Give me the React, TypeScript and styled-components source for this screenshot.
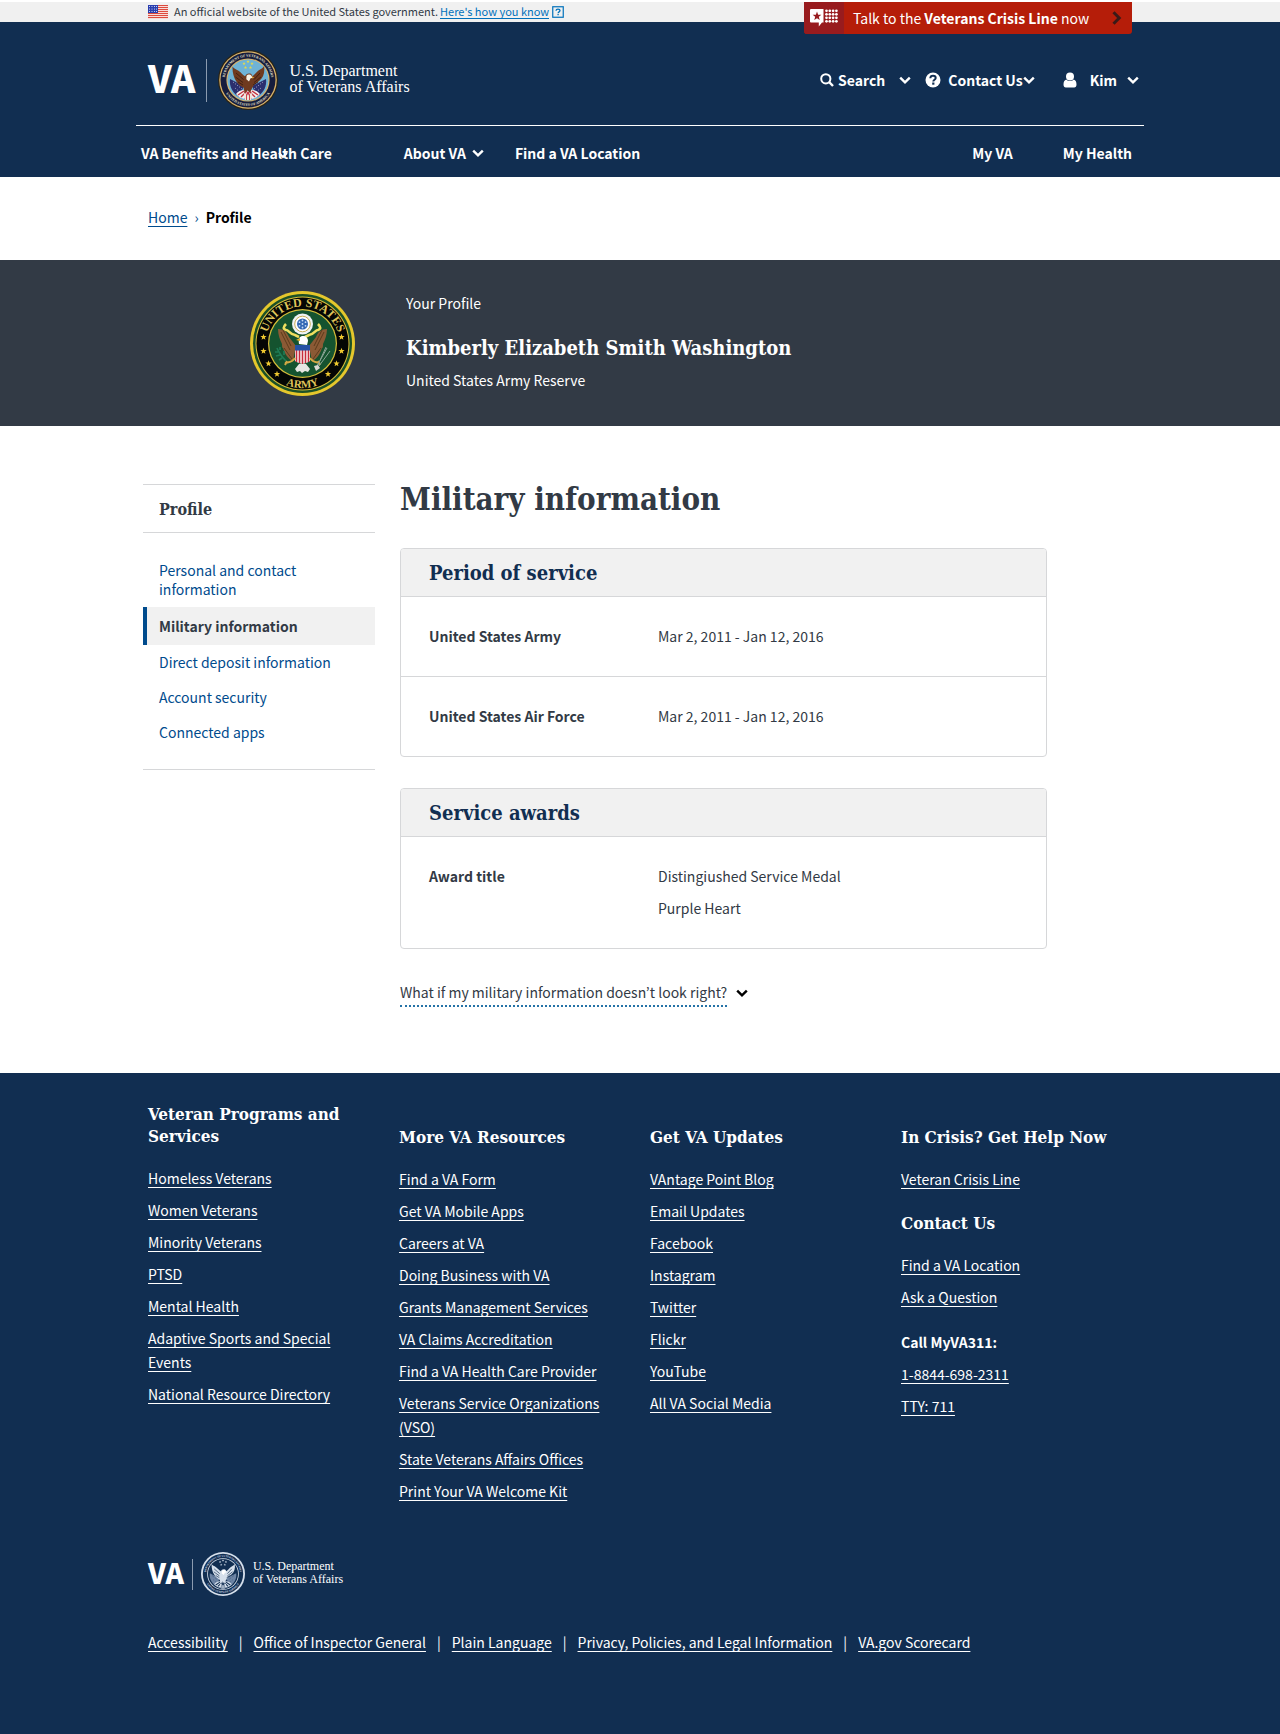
import React from "react";
import styled, { createGlobalStyle } from "styled-components";

const sans = `"Noto Sans CJK KR", "Noto Sans", sans-serif`;
const slab = `"DejaVu Serif Condensed", "DejaVu Serif", serif`;
const logoSerif = `"Liberation Serif", serif`;

const color = {
  navy: "#112e51",
  slate: "#323a45",
  grey: "#f1f1f1",
  rule: "#d6d7d9",
  link: "#004b8d",
};

const GlobalStyle = createGlobalStyle`
  *, *::before, *::after { box-sizing: border-box; }
  body {
    margin: 0;
    background: #fff;
    color: ${color.slate};
    font-family: ${sans};
    font-size: 14px;
    line-height: 24px;
  }
  h1, h2, h3, p, ul, ol, dl, dd { margin: 0; padding: 0; }
  ul, ol { list-style: none; }
  button { font: inherit; color: inherit; background: none; border: 0; padding: 0; cursor: pointer; }
  svg { display: block; flex: none; }
`;

const Container = styled.div`
  max-width: 1008px;
  margin: 0 auto;
`;

/* Government banner */
const Banner = styled.div`
  margin-top: 2px;
  background: #f0f0f0;
`;

const BannerInner = styled(Container)`
  position: relative;
  display: flex;
  align-items: center;
  height: 20px;
  padding: 0 12px;
  font-size: 11px;
  line-height: 18px;
`;

const BannerText = styled.span`
  margin: 0 2px 2px 6px;
`;

const BannerToggle = styled.button`
  display: flex;
  align-items: center;
  gap: 3px;
  color: #0071bb;
  line-height: 14px;
  span { margin-bottom: 1px; border-bottom: 1px solid currentColor; }
`;

const CrisisLine = styled.button`
  position: absolute;
  top: 0;
  right: 12px;
  z-index: 1;
  display: flex;
  align-items: center;
  width: 328px;
  height: 32px;
  padding-right: 10px;
  overflow: hidden;
  border-radius: 0 0 3px 3px;
  background: #b51d09;
  color: #fff;
  font-size: 14px;
  text-align: left;
`;

const CrisisBadge = styled.span`
  display: flex;
  align-items: center;
  justify-content: center;
  width: 40px;
  height: 32px;
  margin-right: 9px;
  background: #981b1e;
`;

const CrisisText = styled.span`
  flex: 1;
  white-space: nowrap;
`;

/* Header */
const Header = styled.header`
  background: ${color.navy};
  color: #fff;
`;

const HeaderTop = styled(Container)`
  display: flex;
  justify-content: space-between;
  height: 104px;
  padding: 28px 5px 0 12px;
  border-bottom: 1px solid #fff;
`;

const Brand = styled.a<{ $small?: boolean }>`
  display: flex;
  align-items: center;
  gap: ${(p) => (p.$small ? 8 : 11)}px;
  height: ${(p) => (p.$small ? 44 : 60)}px;
  color: #fff;
  text-decoration: none;
`;

const Wordmark = styled.span<{ $small?: boolean }>`
  padding-bottom: ${(p) => (p.$small ? 4 : 6)}px;
  font-weight: 900;
  font-size: ${(p) => (p.$small ? 28 : 37)}px;
  line-height: 1;
`;

const BrandRule = styled.span<{ $small?: boolean }>`
  width: 1px;
  height: ${(p) => (p.$small ? 31 : 43)}px;
  background: #8b9bb0;
`;

const BrandName = styled.span<{ $small?: boolean }>`
  padding-bottom: 2px;
  font-family: ${logoSerif};
  font-size: ${(p) => (p.$small ? 12 : 16)}px;
  line-height: ${(p) => (p.$small ? 13 : 16)}px;
  white-space: nowrap;
`;

const UserTools = styled.div`
  display: flex;
  align-items: center;
  height: 60px;
  gap: 14px;
`;

const ToolButton = styled.button<{ $gap: number }>`
  display: flex;
  align-items: center;
  font-weight: 700;
  white-space: nowrap;
  > span { margin-left: ${(p) => p.$gap}px; }
`;

const ToolChevron = styled.i<{ $gap: number }>`
  margin-left: ${(p) => p.$gap}px;
`;

const MainNav = styled(Container)`
  display: flex;
  align-items: center;
  height: 51px;
  padding: 3px 12px 0 5px;
`;

const NavItem = styled.button<{ $gapBefore?: number }>`
  position: relative;
  display: flex;
  align-items: center;
  gap: 6px;
  margin-left: ${(p) => p.$gapBefore ?? 0}px;
  font-weight: 700;
  white-space: nowrap;
`;

const NavLink = styled.a<{ $push?: boolean; $gapBefore?: number }>`
  margin-left: ${(p) => (p.$push ? "auto" : `${p.$gapBefore ?? 0}px`)};
  color: #fff;
  font-weight: 700;
  text-decoration: none;
`;

const OverlaidChevron = styled.i`
  position: absolute;
  top: 9px;
  left: 137px;
`;

/* Breadcrumb */
const Breadcrumb = styled(Container)`
  display: flex;
  align-items: center;
  gap: 7px;
  height: 83px;
  padding: 0 12px 3px;
  color: ${color.link};
  a { color: ${color.link}; text-underline-offset: 3px; }
  strong { color: #000; }
`;

/* Profile banner */
const ProfileBand = styled.section`
  background: ${color.slate};
  color: #fff;
`;

const ProfileInner = styled(Container)`
  display: flex;
  gap: 51px;
  height: 166px;
  padding: 31px 12px 0 114px;
`;

const ProfileText = styled.div`
  > p { line-height: 24px; }
  h2 { margin: 21px 0 8px; font: 700 20px/24px ${slab}; }
`;

/* Main area */
const Main = styled(Container)`
  display: grid;
  grid-template-columns: 232px minmax(0, 647px);
  gap: 25px;
  padding: 58px 0 66px 7px;
`;

const SideNav = styled.nav`
  align-self: start;
  border-top: 1px solid ${color.rule};
  border-bottom: 1px solid ${color.rule};
  padding-bottom: 19px;
`;

const SideTitle = styled.h2`
  margin-bottom: 20px;
  padding: 3px 16px 0;
  border-bottom: 1px solid ${color.rule};
  font: 700 16px/44px ${slab};
`;

const SideLink = styled.a<{ $current?: boolean }>`
  display: block;
  padding: ${(p) => (p.$current ? "10px 12px 9px" : "8px 16px")};
  border-left: ${(p) => (p.$current ? `4px solid ${color.link}` : "0")};
  background: ${(p) => (p.$current ? color.grey : "transparent")};
  color: ${(p) => (p.$current ? color.slate : color.link)};
  font-weight: ${(p) => (p.$current ? 700 : 400)};
  line-height: 19px;
  text-decoration: none;
`;

const Content = styled.main``;

const PageTitle = styled.h1`
  margin: -5px 0 29px;
  font: 700 31px/40px ${slab};
`;

const Card = styled.section`
  margin-bottom: 31px;
  border: 1px solid ${color.rule};
  border-radius: 4px;
  overflow: hidden;
`;

const CardTitle = styled.h2`
  padding: 2px 28px 0;
  border-bottom: 1px solid ${color.rule};
  background: ${color.grey};
  color: ${color.navy};
  font: 700 20px/45px ${slab};
`;

const CardRow = styled.div`
  display: grid;
  grid-template-columns: 200px 1fr;
  column-gap: 29px;
  padding: 23px 28px 24px;
  line-height: 32px;
  & + & { border-top: 1px solid ${color.rule}; }
  dt { font-weight: 700; }
`;

const HelpToggle = styled.button`
  display: flex;
  align-items: flex-start;
  gap: 9px;
  span { padding-bottom: 1px; border-bottom: 2px dotted #2573a7; }
  svg { margin-top: 7px; color: #000; }
`;

/* Footer */
const Footer = styled.footer`
  background: ${color.navy};
  color: #fff;
`;

const FooterInner = styled(Container)`
  padding: 30px 0 80px 12px;
`;

const FooterColumns = styled.div`
  display: grid;
  grid-template-columns: repeat(4, 210px);
  column-gap: 41px;
  min-height: 449px;
`;

const FooterColumn = styled.div<{ $offset?: boolean }>`
  padding-top: ${(p) => (p.$offset ? 23 : 0)}px;
`;

const FooterHeading = styled.h3<{ $spaced?: boolean }>`
  margin: ${(p) => (p.$spaced ? "21px" : "0")} 0 19px;
  font: 700 17px/22px ${slab};
`;

const FooterLinks = styled.ul`
  display: flex;
  flex-direction: column;
  gap: 8px;
  a { color: #fff; text-underline-offset: 3px; }
`;

const CallLabel = styled.p`
  margin: 21px 0 8px;
  font-weight: 700;
`;

const LegalLinks = styled.ul`
  display: flex;
  flex-wrap: wrap;
  margin-top: 34px;
  li + li::before { content: "|"; margin: 0 11px; }
  a { color: #fff; text-underline-offset: 3px; }
`;

const Chevron = ({ size = 12 }: { size?: number }) => (
  <svg width={size} height={size} viewBox="0 0 12 12" fill="none" stroke="currentColor" strokeWidth="2.4" aria-hidden="true">
    <path d="M1.2 3.6 6 8.4l4.8-4.8" />
  </svg>
);

const SearchIcon = () => (
  <svg width="14" height="14" viewBox="0 0 14 14" fill="none" stroke="currentColor" strokeWidth="2" aria-hidden="true">
    <circle cx="5.8" cy="5.8" r="4.6" />
    <path d="m9.2 9.2 3.8 3.8" strokeWidth="2.4" />
  </svg>
);

const HelpIcon = () => (
  <svg width="16" height="16" viewBox="0 0 16 16" aria-hidden="true">
    <circle cx="8" cy="8" r="7.5" fill="currentColor" />
    <path d="M5.3 6.2C5.4 4.5 6.5 3.8 8 3.8c1.600 0 2.700.9 2.700 2.200 0 1.700-2.400 1.800-2.400 3.500" fill="none" stroke={color.navy} strokeWidth="2" />
    <rect x="7.200" y="10.500" width="2.200" height="2.200" fill={color.navy} />
  </svg>
);

const UserIcon = () => (
  <svg width="14" height="16" viewBox="0 0 14 16" fill="currentColor" aria-hidden="true">
    <circle cx="7" cy="4.400" r="4" />
    <path d="M3.300 7.500C1.300 8 .5 10 .5 12.800c0 1.600.9 2.700 2.300 2.700h8.400c1.400 0 2.300-1.100 2.300-2.700 0-2.800-.8-4.800-2.800-5.300C9.700 8.500 8.400 9 7 9s-2.700-.5-3.700-1.500Z" />
  </svg>
);

const FlagIcon = () => (
  <svg width="20" height="14" viewBox="0 0 20 14" aria-hidden="true">
    <rect width="20" height="14" fill="#fff" />
    {[0, 2, 4, 6, 8, 10, 12].map((y) => (
      <rect key={y} y={y} width="20" height="1.200" fill="#dd4b3e" />
    ))}
    <rect width="10" height="8" fill="#2a3fb0" />
    {[1.5, 4, 6.500].map((y) =>
      [1.5, 4, 6.500, 8.500].map((x) => <circle key={`${x}-${y}`} cx={x} cy={y} r=".5" fill="#fff" />)
    )}
  </svg>
);

const QuestionBoxIcon = () => (
  <svg width="12" height="12" viewBox="0 0 12 12" fill="none" stroke="currentColor" aria-hidden="true">
    <rect x=".75" y=".75" width="10.500" height="10.500" strokeWidth="1.200" />
    <path d="M4 4.700C4.100 3.600 4.900 3.100 6 3.100s2 .6 2 1.500C8 5.900 6.100 5.800 6.100 7.200M6.100 8v1.300" strokeWidth="1.300" />
  </svg>
);

const star = (cx: number, cy: number, r: number) =>
  Array.from({ length: 10 }, (_, i) => {
    const a = (Math.PI / 5) * i - Math.PI / 2;
    const q = i % 2 ? r * 0.42 : r;
    return `${(cx + q * Math.cos(a)).toFixed(2)},${(cy + q * Math.sin(a)).toFixed(2)}`;
  }).join(" ");

const CrisisIcon = () => (
  <svg width="28" height="18" viewBox="0 0 28 18" fill="#fff" aria-hidden="true">
    <path d="M1 0h12.500v13.500H12L8.800 17.500v-4H1a1 1 0 0 1-1-1V1a1 1 0 0 1 1-1Z" />
    <polygon points={star(7, 7.200, 4.600)} fill="#981b1e" />
    {[1.800, 5.300, 8.800, 12.300].map((y) =>
      [16.500, 19.800, 23.100, 26.400].map((x) => <circle key={`${x}-${y}`} cx={x} cy={y} r="1.350" />)
    )}
  </svg>
);

const CrisisChevron = () => (
  <svg width="10" height="14" viewBox="0 0 10 14" fill="none" stroke="#3a1a18" strokeWidth="3" aria-hidden="true">
    <path d="m1.500 1.200 5.700 5.800-5.700 5.800" />
  </svg>
);

const VaSeal = ({ size, mono = false }: { size: number; mono?: boolean }) => {
  const id = mono ? "mono" : "full";
  const pale = "#d5dfeb";
  const ring = mono ? pale : "#d9b36a";
  const band = mono ? color.navy : "#161d3d";
  const sky = mono ? color.navy : "#6fb3d6";
  const wing = mono ? pale : "#6f3a1f";
  return (
    <svg width={size} height={size} viewBox="0 0 60 60" aria-hidden="true">
      <defs>
        <path id={`${id}-top`} d="M30 53.300a23.300 23.300 0 0 1 0-46.600a23.300 23.300 0 0 1 0 46.600" />
        <path id={`${id}-bottom`} d="M30 4.200a25.800 25.800 0 0 0 0 51.600a25.800 25.800 0 0 0 0-51.600" />
      </defs>
      <circle cx="30" cy="30" r="30" fill={mono ? pale : "#2a2417"} />
      <circle cx="30" cy="30" r="28.800" fill={ring} />
      <circle cx="30" cy="30" r="27.500" fill={band} />
      <circle cx="30" cy="30" r="21.600" fill={ring} />
      <circle cx="30" cy="30" r="20.500" fill={sky} />
      <g fill={mono ? pale : "#e9e2cd"} fontFamily="Liberation Serif, serif" fontWeight="700" fontSize="3.600" textAnchor="middle">
        <text><textPath href={`#${id}-top`} startOffset="50%">DEPARTMENT OF VETERANS AFFAIRS</textPath></text>
        <text><textPath href={`#${id}-bottom`} startOffset="50%">UNITED STATES OF AMERICA</textPath></text>
      </g>
      <g fill={mono ? pale : "#e6d94a"}>
        <polygon points={star(30, 11.500, 1.700)} />
        <polygon points={star(26, 13.500, 1.700)} />
        <polygon points={star(34, 13.500, 1.700)} />
        <polygon points={star(27.500, 17.500, 1.700)} />
        <polygon points={star(32.500, 17.500, 1.700)} />
      </g>
      <path d="M12 29 26 36l-5 11C15 43 11 37 12 29Z" fill={mono ? "#6d84a4" : "#2b2f6e"} />
      <path d="M48 29 34 36l5 11c6-4 10-10 9-18Z" fill={mono ? "#6d84a4" : "#2b2f6e"} />
      <path d="m15 32 9 7m-7-1 6 5m22-11-9 7m7-1-6 5" stroke={mono ? color.navy : "#d5d8e8"} strokeWidth=".7" strokeDasharray="1 1.600" />
      <path d="M18 44c3-4 8-5 12-3 4-2 9-1 12 3-3 4-7 5-12 5s-9-1-12-5Z" fill={mono ? pale : "#f4eeee"} />
      <path d="m20 45 6-4m-3 6 6-6m-2 8 3-7m10 3-6-4m3 6-6-6m2 8-3-7" stroke={mono ? color.navy : "#c2323f"} strokeWidth="1.400" />
      <path
        d="M14.500 16.500c1 2 3.500 2.600 6 4.200 3 2 4.500 4.600 6.500 5.600 1-2 2.700-3.300 5-2.700 1.400.3 2 1.400 2.400 2.700 2-1 3.500-4 6.400-6 2.500-1.600 4-2 5.200-4 1 6-.5 11-4.600 14.500-3 2.700-5.500 3.600-7 6.700l-2.400 5.200-2.500-2.500-3 3-.8-5.500C20 35.500 14 28 14.500 16.500Z"
        fill={wing}
      />
      <path
        d="m18 23 7.500 6.500M17.500 27l7.500 5.500M42 23l-6 6.500M43 27l-7 5.500M20 32l5 3M40 32l-5 3"
        stroke={mono ? color.navy : "#3e1e12"}
        strokeWidth=".9"
      />
      <path d="M28.500 26c1-1.800 4.500-2 5.300.2l1.800 1.600-3 .4-1.600 3.200-2.700-2.200Z" fill={mono ? "#fff" : "#f6f1e5"} />
      <path d="m33.800 26.600 2.400 1-2 .8Z" fill={mono ? pale : "#e0a62f"} />
      <path d="M25.500 42.500 30 46l4.500-3.500L33 50h-6Z" fill={mono ? pale : "#efe6da"} />
      <path d="M28.500 44.500V50m3-5.500V50" stroke={mono ? color.navy : "#c2323f"} strokeWidth=".9" />
    </svg>
  );
};

const ArmySeal = () => (
  <svg width="105" height="105" viewBox="0 0 105 105" role="img" aria-label="United States Army seal">
    <defs>
      <path id="army-top" d="M52.500 89.500a37 37 0 0 1 0-74a37 37 0 0 1 0 74" />
      <path id="army-bottom" d="M52.500 8a44.500 44.500 0 0 0 0 89a44.500 44.500 0 0 0 0-89" />
    </defs>
    <circle cx="52.500" cy="52.500" r="52.500" fill="#e5c72c" />
    <circle cx="52.500" cy="52.500" r="49.500" fill="#1c5127" />
    <circle cx="52.500" cy="52.500" r="47" fill="#d8bf3a" />
    <circle cx="52.500" cy="52.500" r="46" fill="#050604" />
    <circle cx="52.500" cy="52.500" r="34.500" fill="#d8bf3a" />
    <circle cx="52.500" cy="52.500" r="33.300" fill="#15532f" />
    <g fill="#dfc35a" fontFamily="Liberation Serif, serif" fontWeight="700" textAnchor="middle">
      <text fontSize="12"><textPath href="#army-top" startOffset="50%">UNITED STATES</textPath></text>
      <text fontSize="11"><textPath href="#army-bottom" startOffset="50%">ARMY</textPath></text>
    </g>
    <g fill="#f0c92f">
      {[[13.500, 46], [13.500, 60], [18.500, 72.500], [27, 83], [91.500, 46], [91.500, 60], [86.500, 72.500], [78, 83]].map(([x, y]) => (
        <polygon key={`${x}-${y}`} points={star(x, y, 3.300)} />
      ))}
    </g>
    {/* eagle wings */}
    <path d="M28 38c6 0 9 3 11 8l7 9-3 15c-5-2-8-7-10-13-1 0-1-2-1-4-2-4-4-9-4-15Z" fill="#8b5a35" />
    <path d="M77 38c-6 0-9 3-11 8l-7 9 3 15c5-2 8-7 10-13 1 0 1-2 1-4 2-4 4-9 4-15Z" fill="#8b5a35" />
    <path d="m31 41 9 18m-7-20 8 16m-7 2 8 11m32-27-9 18m7-20-8 16m7 2-8 11" fill="none" stroke="#573719" strokeWidth=".9" />
    {/* scroll */}
    <path d="M36 33c-3 3-3 5 0 6 3 0 3 4 9 5l4 2m19-13c3 3 3 5 0 6-3 0-3 4-9 5l-4 2" fill="none" stroke="#efdf5f" strokeWidth="2.600" />
    {/* crest */}
    <circle cx="52.500" cy="33" r="10.500" fill="#eef2f5" />
    <circle cx="52.500" cy="33" r="7.800" fill="#fff" stroke="#c9ad55" strokeWidth="1" />
    <circle cx="52.500" cy="33" r="5.500" fill="#3267b4" />
    {[[52.500, 29.500], [49.500, 31.200], [55.500, 31.200], [49.500, 34.800], [55.500, 34.800], [52.500, 36.500], [52.500, 33]].map(([x, y]) => (
      <circle key={`${x}-${y}`} cx={x} cy={y} r=".9" fill="#c8dbf3" />
    ))}
    {/* head */}
    <path d="M49 53c-1-6 1-8 4-8s5 2 5 5l-1 4Z" fill="#fff" />
    <path d="m50 47-4 2 4 1Z" fill="#e8b52c" />
    {/* shield */}
    <path d="M45 54h15v16c-3 2-5 2-7.500 3-2.500-1-4.500-1-7.500-3Z" fill="#f7eeee" />
    <path d="M46.500 59v12M49.500 59v13M52.500 59v14M55.500 59v13M58.500 59v12" stroke="#c72b3b" strokeWidth="1.500" />
    <rect x="45" y="54" width="15" height="5.500" fill="#2452a4" />
    {/* legs and tail */}
    <path d="M45 67c-3 5-7 4-10 5m2-2-2 4m25-7c3 5 7 4 10 5m-2-2 2 4" fill="none" stroke="#d5a944" strokeWidth="2" />
    <path d="m49 73-4 5 2 3 3-1 2 2 3-2 3 1 2-3-4-5Z" fill="#e6e6e2" />
    {/* olive branch and arrows */}
    <path d="M27 57c2 5 5 9 9 13m-8-9-3 0m5 3-4 1m6 2-3 2m1-10v-3m4 8v-4" fill="none" stroke="#1e7b55" strokeWidth="1.700" />
    <path d="m67 75 10-18m-8 18 11-15m-12 14 8-18" fill="none" stroke="#8ba597" strokeWidth="1" />
    <path d="m64 75 4-1 2 3-4 3Z" fill="#d9d9d2" />
  </svg>
);

const BrandLogo = ({ small = false }: { small?: boolean }) => (
  <Brand href="#" $small={small} aria-label="VA U.S. Department of Veterans Affairs">
    <Wordmark $small={small}>VA</Wordmark>
    <BrandRule $small={small} />
    <VaSeal size={small ? 44 : 60} mono={small} />
    <BrandName $small={small}>
      U.S. Department
      <br />
      of Veterans Affairs
    </BrandName>
  </Brand>
);

const sideLinks = [
  "Personal and contact information",
  "Military information",
  "Direct deposit information",
  "Account security",
  "Connected apps",
];

const programs = [
  "Homeless Veterans",
  "Women Veterans",
  "Minority Veterans",
  "PTSD",
  "Mental Health",
  "Adaptive Sports and Special Events",
  "National Resource Directory",
];

const resources = [
  "Find a VA Form",
  "Get VA Mobile Apps",
  "Careers at VA",
  "Doing Business with VA",
  "Grants Management Services",
  "VA Claims Accreditation",
  "Find a VA Health Care Provider",
  "Veterans Service Organizations (VSO)",
  "State Veterans Affairs Offices",
  "Print Your VA Welcome Kit",
];

const updates = [
  "VAntage Point Blog",
  "Email Updates",
  "Facebook",
  "Instagram",
  "Twitter",
  "Flickr",
  "YouTube",
  "All VA Social Media",
];

const legal = [
  "Accessibility",
  "Office of Inspector General",
  "Plain Language",
  "Privacy, Policies, and Legal Information",
  "VA.gov Scorecard",
];

const LinkItems = ({ items }: { items: string[] }) => (
  <>
    {items.map((item) => (
      <li key={item}>
        <a href="#">{item}</a>
      </li>
    ))}
  </>
);

export default function App() {
  return (
    <>
      <GlobalStyle />
      <Banner>
        <BannerInner>
          <FlagIcon />
          <BannerText>An official website of the United States government.</BannerText>
          <BannerToggle type="button">
            <span>Here's how you know</span>
            <QuestionBoxIcon />
          </BannerToggle>
          <CrisisLine type="button">
            <CrisisBadge>
              <CrisisIcon />
            </CrisisBadge>
            <CrisisText>
              Talk to the <strong>Veterans Crisis Line</strong> now
            </CrisisText>
            <CrisisChevron />
          </CrisisLine>
        </BannerInner>
      </Banner>

      <Header>
        <HeaderTop>
          <BrandLogo />
          <UserTools>
            <ToolButton type="button" $gap={4}>
              <SearchIcon />
              <span>Search</span>
              <ToolChevron $gap={14}>
                <Chevron />
              </ToolChevron>
            </ToolButton>
            <ToolButton type="button" $gap={7}>
              <HelpIcon />
              <span>Contact Us</span>
              <ToolChevron $gap={0}>
                <Chevron />
              </ToolChevron>
            </ToolButton>
            <ToolButton type="button" $gap={13}>
              <ToolChevron $gap={14}>
                <UserIcon />
              </ToolChevron>
              <span>Kim</span>
              <ToolChevron $gap={10}>
                <Chevron />
              </ToolChevron>
            </ToolButton>
          </UserTools>
        </HeaderTop>
        <MainNav as="nav" aria-label="Main">
          <NavItem type="button">
            VA Benefits and Health Care
            <OverlaidChevron>
              <Chevron size={10} />
            </OverlaidChevron>
          </NavItem>
          <NavItem type="button" $gapBefore={72}>
            About VA
            <Chevron />
          </NavItem>
          <NavLink href="#" $gapBefore={31}>
            Find a VA Location
          </NavLink>
          <NavLink href="#" $push>
            My VA
          </NavLink>
          <NavLink href="#" $gapBefore={50}>
            My Health
          </NavLink>
        </MainNav>
      </Header>

      <Breadcrumb as="nav" aria-label="Breadcrumb">
        <a href="#">Home</a>
        <span>›</span>
        <strong>Profile</strong>
      </Breadcrumb>

      <ProfileBand>
        <ProfileInner>
          <ArmySeal />
          <ProfileText>
            <p>Your Profile</p>
            <h2>Kimberly Elizabeth Smith Washington</h2>
            <p>United States Army Reserve</p>
          </ProfileText>
        </ProfileInner>
      </ProfileBand>

      <Main>
        <SideNav aria-label="Profile">
          <SideTitle>Profile</SideTitle>
          <ul>
            {sideLinks.map((label) => (
              <li key={label}>
                <SideLink href="#" $current={label === "Military information"}>
                  {label}
                </SideLink>
              </li>
            ))}
          </ul>
        </SideNav>
        <Content>
          <PageTitle>Military information</PageTitle>
          <Card>
            <CardTitle>Period of service</CardTitle>
            <dl>
              <CardRow>
                <dt>United States Army</dt>
                <dd>Mar 2, 2011 - Jan 12, 2016</dd>
              </CardRow>
              <CardRow>
                <dt>United States Air Force</dt>
                <dd>Mar 2, 2011 - Jan 12, 2016</dd>
              </CardRow>
            </dl>
          </Card>
          <Card>
            <CardTitle>Service awards</CardTitle>
            <dl>
              <CardRow>
                <dt>Award title</dt>
                <dd>
                  <p>Distingiushed Service Medal</p>
                  <p>Purple Heart</p>
                </dd>
              </CardRow>
            </dl>
          </Card>
          <HelpToggle type="button" aria-expanded="false">
            <span>What if my military information doesn’t look right?</span>
            <Chevron />
          </HelpToggle>
        </Content>
      </Main>

      <Footer>
        <FooterInner>
          <FooterColumns>
            <FooterColumn>
              <FooterHeading>Veteran Programs and Services</FooterHeading>
              <FooterLinks>
                <LinkItems items={programs} />
              </FooterLinks>
            </FooterColumn>
            <FooterColumn $offset>
              <FooterHeading>More VA Resources</FooterHeading>
              <FooterLinks>
                <LinkItems items={resources} />
              </FooterLinks>
            </FooterColumn>
            <FooterColumn $offset>
              <FooterHeading>Get VA Updates</FooterHeading>
              <FooterLinks>
                <LinkItems items={updates} />
              </FooterLinks>
            </FooterColumn>
            <FooterColumn $offset>
              <FooterHeading>In Crisis? Get Help Now</FooterHeading>
              <FooterLinks>
                <LinkItems items={["Veteran Crisis Line"]} />
              </FooterLinks>
              <FooterHeading $spaced>Contact Us</FooterHeading>
              <FooterLinks>
                <LinkItems items={["Find a VA Location", "Ask a Question"]} />
              </FooterLinks>
              <CallLabel>Call MyVA311:</CallLabel>
              <FooterLinks>
                <LinkItems items={["1-8844-698-2311", "TTY: 711"]} />
              </FooterLinks>
            </FooterColumn>
          </FooterColumns>
          <BrandLogo small />
          <LegalLinks>
            <LinkItems items={legal} />
          </LegalLinks>
        </FooterInner>
      </Footer>
    </>
  );
}
